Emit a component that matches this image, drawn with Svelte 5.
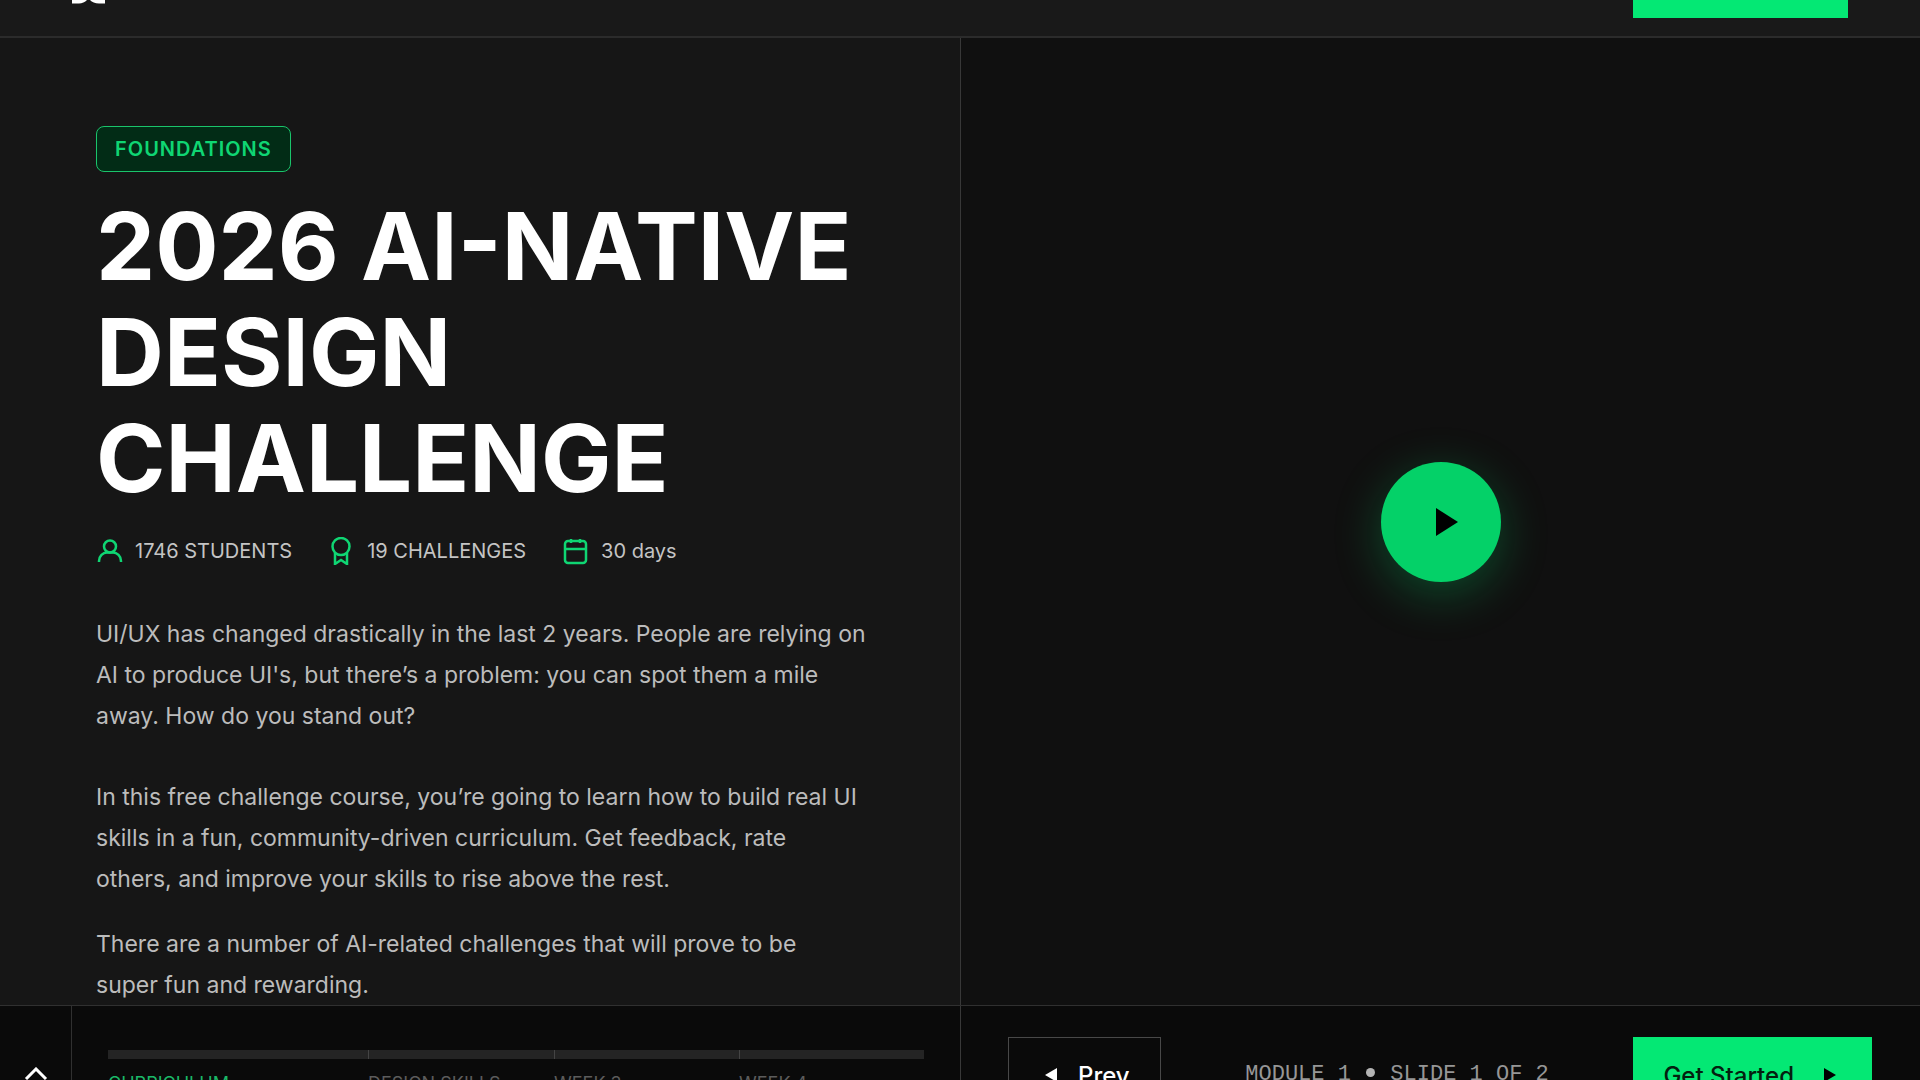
<script>
  const meta = [
    { icon: "user", text: "1746 STUDENTS" },
    { icon: "award", text: "19 CHALLENGES" },
    { icon: "calendar", text: "30 days" },
  ];

  const sections = [
    { name: "CURRICULUM", share: 260 },
    { name: "DESIGN SKILLS", share: 186 },
    { name: "WEEK 3", share: 185 },
    { name: "WEEK 4", share: 185 },
  ];

  let active = $state(0);
</script>

<div class="page">
  <header>
    <a class="logo" href="#home" aria-label="Home">
      <svg width="34" height="4" viewBox="0 0 34 4" fill="#fff">
        <path d="M0 0H15C13 2 10 3.5 7 3.5H0Z" />
        <path d="M18 0H33V3.5H27C23 3.5 20 2 18 0Z" />
      </svg>
    </a>
    <a class="header-cta" href="#join" aria-label="Join"></a>
  </header>

  <main>
    <section class="intro">
      <span class="tag">FOUNDATIONS</span>
      <h1>2026 AI-NATIVE<br />DESIGN<br />CHALLENGE</h1>

      <ul class="meta">
        {#each meta as item}
          <li>
            <svg width="28" height="28" viewBox="0 0 28 28">
              {#if item.icon === "user"}
                <circle cx="14" cy="9.5" r="6" />
                <path d="M3 25v-1c0-5 4-8.5 8-8.5h6c4 0 8 3.5 8 8.5v1" />
              {:else if item.icon === "award"}
                <circle cx="13" cy="9.5" r="8.5" />
                <path d="M7 16v11l6-4 6 4V16" />
              {:else}
                <rect x="3" y="4" width="21" height="22" rx="3" />
                <path d="M3 12h21M9 2v4M18 2v4" />
              {/if}
            </svg>
            {item.text}
          </li>
        {/each}
      </ul>

      <div class="copy">
        <p>
          UI/UX has changed drastically in the last 2 years. People are relying on<br />
          AI to produce UI's, but there’s a problem: you can spot them a mile<br />
          away. How do you stand out?
        </p>
        <p class="spaced">
          In this free challenge course, you’re going to learn how to build real UI<br />
          skills in a fun, community-driven curriculum. Get feedback, rate<br />
          others, and improve your skills to rise above the rest.
        </p>
        <p>
          There are a number of AI-related challenges that will prove to be<br />
          super fun and rewarding.
        </p>
      </div>
    </section>

    <section class="video">
      <button class="play" aria-label="Play video">
        <svg width="22" height="28" viewBox="0 0 22 28"><path d="M0 0L22 14L0 28Z" /></svg>
      </button>
    </section>
  </main>

  <footer>
    <div class="progress">
      <button class="toggle" aria-label="Show curriculum">
        <svg width="24" height="14" viewBox="0 0 24 14">
          <path d="M2 12L12 2L22 12" fill="none" stroke="#fff" stroke-width="3" />
        </svg>
      </button>
      <nav>
        {#each sections as section, i}
          <button
            class="step"
            class:active={active === i}
            style="flex-grow: {section.share}"
            onclick={() => (active = i)}
          >
            <span class="track"></span>
            <span>{section.name}</span>
          </button>
        {/each}
      </nav>
    </div>

    <div class="controls">
      <button class="prev">
        <svg width="12" height="14" viewBox="0 0 12 14"><path d="M12 0V14L0 7Z" /></svg>
        Prev
      </button>
      <span class="position">MODULE 1 <i></i> SLIDE 1 OF 2</span>
      <button class="next">
        Get Started
        <svg width="12" height="14" viewBox="0 0 12 14"><path d="M0 0L12 7L0 14Z" /></svg>
      </button>
    </div>
  </footer>
</div>

<style>
  :global(body) {
    background: #161616;
    overflow: hidden;
  }

  .page {
    display: flex;
    flex-direction: column;
    height: 100vh;
    overflow: hidden;
    font-family: Inter, "Liberation Sans", sans-serif;
    color: #fff;
  }

  button {
    font-family: inherit;
    border: none;
    cursor: pointer;
  }

  header {
    display: flex;
    flex: none;
    justify-content: space-between;
    align-items: flex-start;
    height: 36px;
    padding: 0 72px;
    background: #191919;
    border-bottom: 2px solid #2b2b2b;
  }

  .logo {
    display: flex;
  }

  .header-cta {
    width: 215px;
    height: 18px;
    background: #04e874;
  }

  main {
    display: grid;
    grid-template-columns: 1fr 1fr;
    flex: 1;
    min-height: 0;
  }

  .intro {
    padding: 88px 0 0 96px;
    background: #161616;
    overflow: hidden;
  }

  .tag {
    display: inline-block;
    padding: 0 18px;
    border: 1px solid #1ac46b;
    border-radius: 8px;
    background: #022c16;
    color: #0fd673;
    font-size: 20px;
    font-weight: 600;
    line-height: 44px;
    letter-spacing: 1px;
  }

  h1 {
    margin: 21px 0 0;
    font-size: 94px;
    font-weight: 700;
    line-height: 106px;
    white-space: nowrap;
  }

  .meta {
    display: flex;
    gap: 36px;
    margin: 26px 0 0;
    padding: 0;
    list-style: none;
    color: #c4c4c4;
    font-size: 20px;
    line-height: 28px;
    white-space: nowrap;
  }

  .meta li {
    display: flex;
    align-items: center;
    gap: 11px;
  }

  .meta svg {
    fill: none;
    stroke: #0fd673;
    stroke-width: 2.5;
  }

  .copy {
    margin-top: 49px;
    color: #bcbcbc;
    font-size: 23px;
    line-height: 41px;
    white-space: nowrap;
  }

  .copy p {
    margin: 0;
  }

  .copy .spaced {
    margin: 40px 0 24px;
  }

  .video {
    display: flex;
    justify-content: center;
    align-items: center;
    background: #101010;
    border-left: 1px solid #383838;
  }

  .play {
    display: flex;
    justify-content: center;
    align-items: center;
    width: 120px;
    height: 120px;
    padding: 0 0 0 12px;
    border-radius: 50%;
    background: #04d168;
    box-shadow: 0 12px 48px rgba(4, 209, 104, 0.3);
  }

  footer {
    display: grid;
    grid-template-columns: 1fr 1fr;
    flex: none;
    height: 74px;
    background: #0a0a0a;
    border-top: 1px solid #303030;
  }

  .progress {
    display: flex;
    min-width: 0;
  }

  .toggle {
    display: flex;
    justify-content: center;
    align-items: flex-start;
    box-sizing: border-box;
    width: 72px;
    padding: 61px 0 0;
    background: none;
    border-right: 1px solid #303030;
  }

  .toggle svg {
    flex: none;
  }

  nav {
    display: flex;
    flex: 1;
    padding: 44px 36px 0;
  }

  .step {
    display: flex;
    flex-direction: column;
    gap: 15px;
    flex-basis: 0;
    min-width: 0;
    padding: 0;
    background: none;
    color: #5c5c5c;
    font-size: 18px;
    line-height: 20px;
    text-align: left;
    white-space: nowrap;
  }

  .step.active {
    color: #1bb868;
  }

  .track {
    align-self: stretch;
    flex: none;
    height: 9px;
    background: #242424;
  }

  .step + .step .track {
    border-left: 1px solid #444;
  }

  .controls {
    display: flex;
    justify-content: space-between;
    align-items: flex-start;
    padding: 31px 48px 0 47px;
    border-left: 1px solid #383838;
  }

  .prev,
  .next {
    display: flex;
    align-items: center;
    justify-content: center;
    box-sizing: border-box;
    height: 76px;
    font-size: 24px;
    font-weight: 500;
  }

  .prev {
    gap: 21px;
    padding: 0 30px 0 36px;
    border: 1px solid #484848;
    background: none;
    color: #fff;
  }

  .prev svg {
    fill: #fff;
  }

  .next {
    gap: 30px;
    padding: 0 36px 0 30px;
    background: #04e874;
    color: #04200f;
  }

  .position {
    color: #969696;
    font-family: "Liberation Mono", monospace;
    font-size: 22px;
    line-height: 76px;
    white-space: nowrap;
  }

  .position i {
    display: inline-block;
    width: 9px;
    height: 9px;
    margin: 0 2px;
    border-radius: 50%;
    background: #b4b4b4;
    vertical-align: 3px;
  }
</style>
